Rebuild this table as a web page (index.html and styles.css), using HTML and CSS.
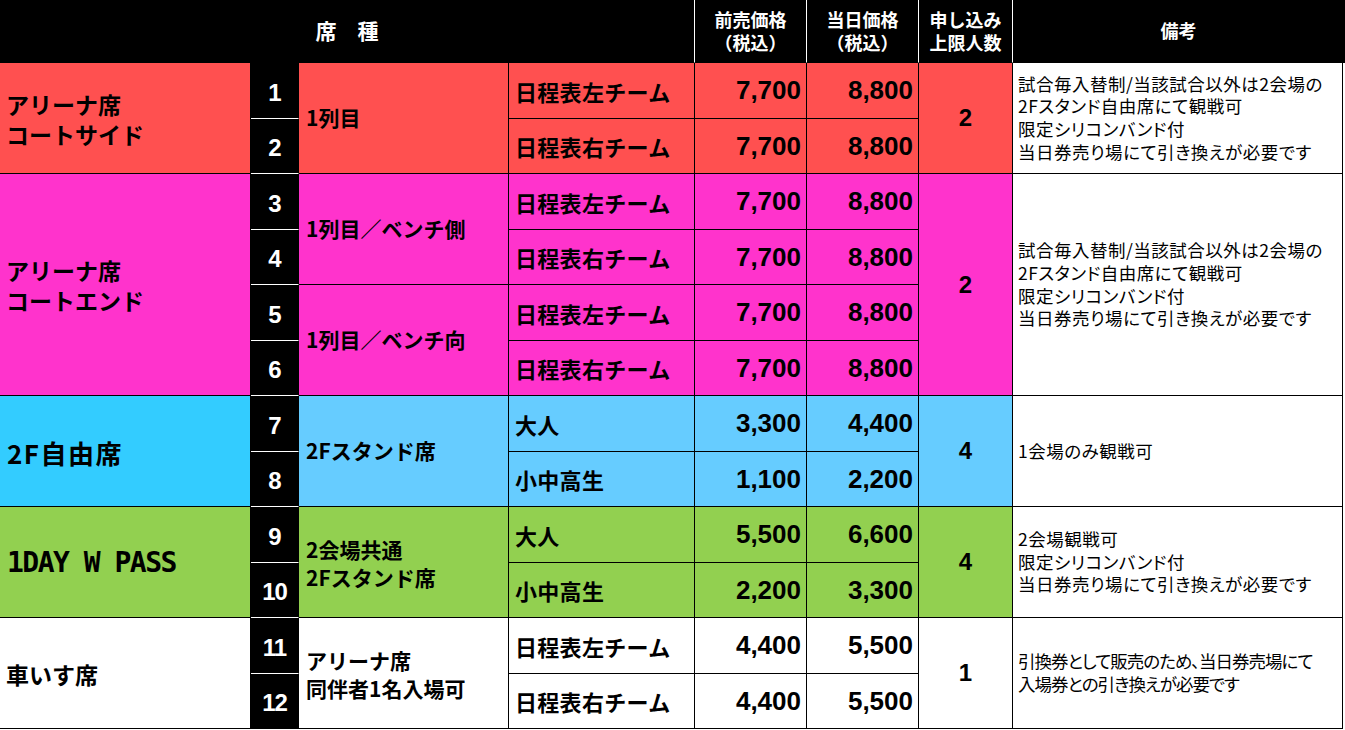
FILE: index.html
```html
<!DOCTYPE html>
<html lang="ja">
<head>
<meta charset="utf-8">
<title>席種・価格表</title>
<link rel="stylesheet" href="styles.css">
</head>
<body>
<div class="table">
  <div class="h h-seat">席　種</div>
  <div class="h h-col5">前売価格<br>（税込）</div>
  <div class="h h-col6">当日価格<br>（税込）</div>
  <div class="h h-col7">申し込み<br>上限人数</div>
  <div class="h h-col8 h-last">備考</div>

  <!-- section A -->
  <div class="c1 red span2">アリーナ席<br>コートサイド</div>
  <div class="num">1</div>
  <div class="c3 red span2">1列目</div>
  <div class="c4 red">日程表左チーム</div>
  <div class="c5 red price">7,700</div>
  <div class="c6 red price">8,800</div>
  <div class="c7 red span2 limit">2</div>
  <div class="c8 span2 note">試合毎入替制/当該試合以外は2会場の<br>2Fスタンド自由席にて観戦可<br>限定シリコンバンド付<br>当日券売り場にて引き換えが必要です</div>
  <div class="num">2</div>
  <div class="c4 red">日程表右チーム</div>
  <div class="c5 red price">7,700</div>
  <div class="c6 red price">8,800</div>

  <!-- section B -->
  <div class="c1 pink span4">アリーナ席<br>コートエンド</div>
  <div class="num">3</div>
  <div class="c3 pink span2">1列目／ベンチ側</div>
  <div class="c4 pink">日程表左チーム</div>
  <div class="c5 pink price">7,700</div>
  <div class="c6 pink price">8,800</div>
  <div class="c7 pink span4 limit">2</div>
  <div class="c8 span4 note">試合毎入替制/当該試合以外は2会場の<br>2Fスタンド自由席にて観戦可<br>限定シリコンバンド付<br>当日券売り場にて引き換えが必要です</div>
  <div class="num">4</div>
  <div class="c4 pink">日程表右チーム</div>
  <div class="c5 pink price">7,700</div>
  <div class="c6 pink price">8,800</div>
  <div class="num">5</div>
  <div class="c3 pink span2">1列目／ベンチ向</div>
  <div class="c4 pink">日程表左チーム</div>
  <div class="c5 pink price">7,700</div>
  <div class="c6 pink price">8,800</div>
  <div class="num">6</div>
  <div class="c4 pink">日程表右チーム</div>
  <div class="c5 pink price">7,700</div>
  <div class="c6 pink price">8,800</div>

  <!-- section C -->
  <div class="c1 sky span2 big">2F自由席</div>
  <div class="num">7</div>
  <div class="c3 blue span2">2Fスタンド席</div>
  <div class="c4 blue">大人</div>
  <div class="c5 blue price">3,300</div>
  <div class="c6 blue price">4,400</div>
  <div class="c7 blue span2 limit">4</div>
  <div class="c8 span2 note">1会場のみ観戦可</div>
  <div class="num">8</div>
  <div class="c4 blue">小中高生</div>
  <div class="c5 blue price">1,100</div>
  <div class="c6 blue price">2,200</div>

  <!-- section D -->
  <div class="c1 green span2 mono">1DAY W PASS</div>
  <div class="num">9</div>
  <div class="c3 green span2 two">2会場共通<br>2Fスタンド席</div>
  <div class="c4 green">大人</div>
  <div class="c5 green price">5,500</div>
  <div class="c6 green price">6,600</div>
  <div class="c7 green span2 limit">4</div>
  <div class="c8 span2 note">2会場観戦可<br>限定シリコンバンド付<br>当日券売り場にて引き換えが必要です</div>
  <div class="num">10</div>
  <div class="c4 green">小中高生</div>
  <div class="c5 green price">2,200</div>
  <div class="c6 green price">3,300</div>

  <!-- section E -->
  <div class="c1 span2">車いす席</div>
  <div class="num">11</div>
  <div class="c3 span2 two">アリーナ席<br>同伴者1名入場可</div>
  <div class="c4">日程表左チーム</div>
  <div class="c5 price">4,400</div>
  <div class="c6 price">5,500</div>
  <div class="c7 span2 limit">1</div>
  <div class="c8 span2 note note-tight">引換券として販売のため、当日券売場にて<br>入場券との引き換えが必要です</div>
  <div class="num num-last">12</div>
  <div class="c4">日程表右チーム</div>
  <div class="c5 price">4,400</div>
  <div class="c6 price">5,500</div>
</div>
</body>
</html>
```

FILE: styles.css
```css
* { box-sizing: border-box; }
html, body { margin: 0; padding: 0; background: #fff; }
body {
  font-family: "Noto Sans CJK JP", "Noto Sans", sans-serif;
  color: #000;
}
.table {
  display: grid;
  width: 1345px;
  grid-template-columns: 251px 48px 210px 186px 112px 112px 94px 332px;
  grid-template-rows: 63px repeat(12, 55.5px);
}
.table > div {
  display: flex;
  align-items: center;
  border-right: 1px solid #000;
  border-bottom: 1px solid #000;
  font-weight: 700;
  line-height: 1.3;
  min-width: 0;
}
.h {
  background: #000;
  color: #fff;
  justify-content: center;
  text-align: center;
  font-size: 18px;
  line-height: 21px;
  border-right-color: #fff !important;
}
.h-seat { grid-column: 1 / 5; font-size: 21px; }
.h-col5 { grid-column: 5; }
.h-col6 { grid-column: 6; }
.h-col7 { grid-column: 7; }
.h-col8 { grid-column: 8; }
.h-last { border-right-color: #000 !important; }

.c1 { grid-column: 1; font-size: 23px; padding-left: 6px; padding-top: 3px; line-height: 30px; }
.num {
  grid-column: 2;
  background: #000;
  color: #fff;
  justify-content: center;
  font-family: "Liberation Sans", Arial, sans-serif;
  font-size: 24px;
  padding-top: 4px;
  border-bottom-color: #fff !important;
  letter-spacing: -1px;
}
.num-last { border-bottom-color: #000 !important; }
.c3 { grid-column: 3; font-size: 21px; padding-left: 7px; }
.c3.two { line-height: 28px; padding-top: 2px; }
.c4 { grid-column: 4; font-size: 22px; padding-left: 6px; padding-top: 2px; letter-spacing: 0.3px; }
.c5 { grid-column: 5; }
.c6 { grid-column: 6; }
.price {
  justify-content: flex-end;
  padding-right: 5px;
  padding-top: 2px;
  font-family: "Liberation Sans", Arial, sans-serif;
  font-size: 26px;
}
.c7 { grid-column: 7; }
.limit {
  justify-content: center;
  font-family: "Liberation Sans", Arial, sans-serif;
  font-size: 24px;
}
.c8 { grid-column: 8; }
.note {
  background: #fff;
  font-weight: 400 !important;
  font-size: 17.5px;
  line-height: 25px;
  padding-left: 5px;
  margin-right: 2px;
  letter-spacing: 0.5px;
  white-space: nowrap;
  font-feature-settings: "palt" 1;
}
.note-tight { letter-spacing: -1px; }
.span2 { grid-row: span 2; }
.span4 { grid-row: span 4; }
.big { font-size: 26px; padding-left: 7px; letter-spacing: 1.5px; }
.mono {
  font-family: "DejaVu Sans Mono", monospace;
  font-size: 28px;
  letter-spacing: -1.5px;
  font-weight: 700;
  padding-left: 7px;
}

.red { background: #ff5050; }
.pink { background: #ff33cc; }
.sky { background: #33ccff; }
.blue { background: #66ccff; }
.green { background: #92d050; }
```
